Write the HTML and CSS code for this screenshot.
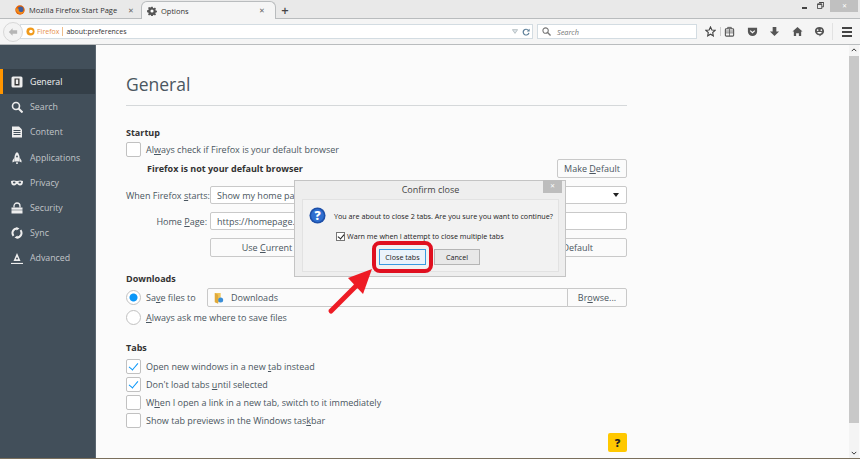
FILE: index.html
```html
<!DOCTYPE html>
<html lang="en">
<head>
    <meta charset="UTF-8">
    <title>Options</title>
    <link rel="stylesheet" href="styles.css">
</head>
<body>
    <div class="window">
        <div class="tabbar">
            <div class="tab">
                <svg class="tab-icon" viewBox="0 0 16 16"><circle cx="8" cy="8" r="7.5" fill="#e66000"/><circle cx="9" cy="7" r="4.5" fill="#3f5f9e"/><path d="M1 5c0 6 5 10 10 9 2-1 4-3 4-6-1 3-4 4-6 3-2 0-4-2-3-5z" fill="#f08a1d"/></svg>
                <span class="tab-title">Mozilla Firefox Start Page</span>
                <span class="tab-close">&#x2715;</span>
            </div>
            <div class="tab tab-active">
                <svg class="tab-icon" viewBox="0 0 16 16"><path d="M6.8 1h2.4l.4 2 1.4.6 1.7-1.1 1.7 1.7-1.1 1.7.6 1.4 2 .4v2.4l-2 .4-.6 1.4 1.1 1.7-1.7 1.7-1.7-1.1-1.4.6-.4 2H6.8l-.4-2-1.4-.6-1.7 1.1-1.7-1.7 1.1-1.7-.6-1.4-2-.4V6.700l2-.4.6-1.4-1.1-1.7 1.7-1.7 1.7 1.1 1.4-.6z" fill="#555"/><circle cx="8" cy="8" r="2.5" fill="#fff"/></svg>
                <span class="tab-title">Options</span>
                <span class="tab-close">&#x2715;</span>
            </div>
            <span class="newtab">+</span>
            <div class="winbtns">
                <span class="win-min"></span>
                <svg class="win-restore" viewBox="0 0 8 8"><path d="M2.5.5h5v5h-2M.5 2.5h5v5h-5z" fill="none" stroke="#444"/><path d="M.5 2.5h5M2.5.5h5" stroke="#444" stroke-width="1.5"/></svg>
                <span class="win-close">&#x2715;</span>
            </div>
        </div>

        <div class="toolbar">
            <span class="back">
                <svg viewBox="0 0 12 12"><path d="M1 6l4.5-4.5V4H11v4H5.5v2.500z" fill="#b5b5b5"/></svg>
            </span>
            <div class="urlbar">
                <svg class="fx-icon" viewBox="0 0 10 10"><circle cx="5" cy="5" r="4.5" fill="#f09a1a"/><circle cx="5.5" cy="5" r="2" fill="#fff"/></svg>
                <span class="fx-label">Firefox</span>
                <span class="url">about:preferences</span>
                <svg class="url-drop" viewBox="0 0 8 6"><path d="M.5.5h7L4 5.5z" fill="#dfe6ea" stroke="#aab4ba"/></svg>
                <svg class="url-reload" viewBox="0 0 10 10"><path d="M8 3a3.6 3.6 0 1 0 .6 3" fill="none" stroke="#5d7f99" stroke-width="1.5"/><path d="M9.5.8v3.500H6z" fill="#5d7f99"/></svg>
            </div>
            <div class="searchbar">
                <svg class="search-icon" viewBox="0 0 10 10"><circle cx="4" cy="4" r="3" fill="none" stroke="#777" stroke-width="1.2"/><path d="M6.2 6.2L9.5 9.5" stroke="#777" stroke-width="1.5"/></svg>
                <span class="search-text">Search</span>
            </div>
            <div class="tools">
                <svg class="tool tool-star" viewBox="0 0 12 12"><path d="M6 1l1.5 3.3 3.500.4-2.600 2.400.7 3.600L6 8.900l-3.100 1.800.7-3.600L1 4.700l3.500-.4z" fill="none" stroke="#444" stroke-width="1.2"/></svg>
                <span class="tool-sep"></span>
                <svg class="tool tool-clip" viewBox="0 0 12 12"><path d="M4 3V1.5h4V3" fill="none" stroke="#555"/><rect x="1.5" y="3" width="9" height="8" rx="1" fill="none" stroke="#555" stroke-width="1.2"/><path d="M2 5.5h8M2 7.5h8M6 3v8" stroke="#555" stroke-width=".8"/></svg>
                <svg class="tool" viewBox="0 0 12 12"><path d="M1 2h10v4a5 5 0 0 1-10 0z" fill="#555"/><path d="M3.5 5L6 7.2 8.5 5" fill="none" stroke="#fff" stroke-width="1.3"/></svg>
                <svg class="tool" viewBox="0 0 12 12"><path d="M4 1h4v5h3l-5 5-5-5h3z" fill="#555"/></svg>
                <svg class="tool" viewBox="0 0 12 12"><path d="M6 1l5.5 5H10v5H7.5V8h-3v3H2V6H.5z" fill="#555"/></svg>
                <svg class="tool" viewBox="0 0 12 12"><path d="M6 1a5 4.600 0 0 1 2 8.800L6 11.500V10A5 4.500 0 0 1 6 1z" fill="#555"/><circle cx="4" cy="4.5" r=".9" fill="#fff"/><circle cx="8" cy="4.5" r=".9" fill="#fff"/><path d="M3.5 6.5h5a2.500 2 0 0 1-5 0z" fill="#fff"/></svg>
                <span class="menu-sep"></span>
                <span class="menu-btn"><i></i><i></i><i></i></span>
            </div>
        </div>

        <div class="content">
            <nav class="sidebar">
                <a class="cat cat-active">
                    <svg viewBox="0 0 12 12"><rect x=".5" y=".5" width="11" height="11" rx="1.5" fill="#eee"/><rect x="3.5" y="2.5" width="5" height="7" fill="#333"/><rect x="4.8" y="3.5" width="2.4" height="4.5" fill="#eee"/></svg>
                    General
                </a>
                <a class="cat">
                    <svg viewBox="0 0 12 12"><circle cx="5" cy="5" r="3.500" fill="none" stroke="#eee" stroke-width="1.6"/><path d="M7.5 7.5l4 4" stroke="#eee" stroke-width="2"/></svg>
                    Search
                </a>
                <a class="cat">
                    <svg viewBox="0 0 12 12"><path d="M1 .5h7l3 3v8H1z" fill="#eee"/><path d="M2.5 4.5h7M2.5 6.500h7M2.5 8.500h7" stroke="#424f5a"/></svg>
                    Content
                </a>
                <a class="cat">
                    <svg viewBox="0 0 12 12"><path d="M6 0c1.800 1.600 2.600 3.600 2.600 6v3.500H3.400V6C3.400 3.600 4.200 1.600 6 0z" fill="#eee"/><path d="M3.400 5.500L1.500 8.500v2l1.900-1zM8.600 5.500l1.900 3v2l-1.900-1z" fill="#eee"/><circle cx="6" cy="4.500" r=".9" fill="#424f5a"/><path d="M5.200 10.300h1.600V12H5.200z" fill="#eee"/></svg>
                    Applications
                </a>
                <a class="cat">
                    <svg viewBox="0 0 12 12"><path d="M0 4c2-1 4-.5 6 0 2-.5 4-1 6 0 0 3-1 4.500-3 4.500S7 7 6 7 5 8.500 3 8.500 0 7 0 4z" fill="#eee"/><ellipse cx="3.2" cy="5.5" rx="1.3" ry=".9" fill="#424f5a"/><ellipse cx="8.8" cy="5.5" rx="1.3" ry=".9" fill="#424f5a"/></svg>
                    Privacy
                </a>
                <a class="cat">
                    <svg viewBox="0 0 12 12"><path d="M3 5.5V4a3 3 0 0 1 6 0v1.500" fill="none" stroke="#eee" stroke-width="1.3"/><rect x=".5" y="5.5" width="11" height="6" fill="#eee"/><path d="M.5 8h11" stroke="#424f5a" stroke-dasharray="1 1"/></svg>
                    Security
                </a>
                <a class="cat">
                    <svg viewBox="0 0 12 12"><path d="M6 1.5a4.500 4.500 0 0 0-3.500 7.300" fill="none" stroke="#eee" stroke-width="2"/><path d="M6 10.500a4.500 4.500 0 0 0 3.500-7.300" fill="none" stroke="#eee" stroke-width="2"/><path d="M5.500 0l3 1.500-3 2zM6.500 12l-3-1.500 3-2z" fill="#eee"/></svg>
                    Sync
                </a>
                <a class="cat">
                    <svg viewBox="0 0 12 12"><path d="M6 1l3.500 8H2.500z" fill="#eee"/><path d="M0 11.500h12" stroke="#eee" stroke-width="1.2"/><circle cx="6" cy="6.500" r="1" fill="#424f5a"/></svg>
                    Advanced
                </a>
            </nav>

            <main class="prefs">
                <h1>General</h1>

                <h2 class="h-startup">Startup</h2>
                <label class="check-row"><span class="box"></span><span>Al<u>w</u>ays check if Firefox is your default browser</span></label>
                <div class="default-row">
                    <strong>Firefox is not your default browser</strong>
                    <span class="btn btn-make"><span>Make <u>D</u>efault</span></span>
                </div>
                <div class="form-row">
                    <span class="form-label">When Firefox <u>s</u>tarts:</span>
                    <div class="field"><span>Show my home page</span><span class="caret"></span></div>
                </div>
                <div class="form-row">
                    <span class="form-label">Home <u>P</u>age:</span>
                    <div class="field"><span>https://homepage.</span></div>
                </div>
                <div class="home-btns">
                    <span class="btn"><span>Use <u>C</u>urrent Pages</span></span>
                    <span class="btn"></span>
                    <span class="btn"><span>Restore to Default</span></span>
                </div>

                <h2 class="h-downloads">Downloads</h2>
                <div class="save-row">
                    <span class="radio radio-on"></span>
                    <span class="save-label">Sa<u>v</u>e files to</span>
                    <div class="folder-field">
                        <svg class="folder-icon" viewBox="0 0 12 14"><path d="M1 1h7v11H1z" fill="#f0c55a"/><path d="M1 1l4 2v11l-4-2z" fill="#e0a93a"/><circle cx="8" cy="9.5" r="3" fill="#3a8ed8"/></svg>
                        <span>Downloads</span>
                    </div>
                    <span class="btn btn-browse"><span>Br<u>o</u>wse...</span></span>
                </div>
                <label class="radio-row"><span class="radio"></span><span><u>A</u>lways ask me where to save files</span></label>

                <h2 class="h-tabs">Tabs</h2>
                <ul class="tab-opts">
                    <li><span class="box box-on"></span><span>Open new windows in a new <u>t</u>ab instead</span></li>
                    <li><span class="box box-on"></span><span>Don't load tabs <u>u</u>ntil selected</span></li>
                    <li><span class="box"></span><span>W<u>h</u>en I open a link in a new tab, switch to it immediately</span></li>
                    <li><span class="box"></span><span>Show tab previews in the Windows tas<u>k</u>bar</span></li>
                </ul>
                <span class="help-btn">?</span>
            </main>

            <div class="scrollbar">
                <svg class="scroll-up" viewBox="0 0 8 5"><path d="M1 4l3-3 3 3" fill="none" stroke="#333" stroke-width="1.3"/></svg>
                <div class="scroll-thumb"></div>
                <svg class="scroll-down" viewBox="0 0 8 5"><path d="M1 1l3 3 3-3" fill="none" stroke="#333" stroke-width="1.3"/></svg>
            </div>
        </div>
        <div class="desktop-edge"></div>

        <div class="dialog">
            <div class="dialog-title">Confirm close<span class="dialog-x">&#x2715;</span></div>
            <div class="dialog-body">
                <div class="dialog-msg">
                    <svg class="q-icon" viewBox="0 0 18 18"><circle cx="9" cy="9" r="8.500" fill="#1d4fa8"/><circle cx="9" cy="9" r="6.800" fill="#2f6fd0"/><text x="9" y="13.5" class="q-mark">?</text></svg>
                    <span>You are about to close 2 tabs. Are you sure you want to continue?</span>
                </div>
                <label class="dialog-check"><span class="mini-box"></span><span>Warn me when I attempt to close multiple tabs</span></label>
                <div class="dialog-btns">
                    <span class="dbtn dbtn-primary">Close tabs</span>
                    <span class="dbtn">Cancel</span>
                </div>
            </div>
        </div>

        <div class="callout"></div>
        <svg class="arrow" viewBox="0 0 50 50"><path d="M5 45L30 20" stroke="#ee1c25" stroke-width="5" stroke-linecap="round"/><path d="M46 3L22 12l15 16z" fill="#ee1c25"/></svg>
    </div>
</body>
</html>
```

FILE: styles.css
```css
* {
    margin: 0;
    padding: 0;
    box-sizing: border-box;
}

html, body {
    height: 100%;
    overflow: hidden;
}

body {
    font-family: "Open Sans", sans-serif;
    font-size: 9px;
    color: #4a5660;
}

svg {
    display: block;
}

.window {
    position: relative;
    display: flex;
    flex-direction: column;
    width: 860px;
    height: 459px;
    background-color: #fbfbfb;
}

/* tab strip */
.tabbar {
    display: flex;
    align-items: flex-end;
    height: 19px;
    padding: 0 2px 0 8px;
    background-color: #e9e9e9;
    border-bottom: 1px solid #b9bcbe;
    color: #333;
}

.tab {
    display: flex;
    align-items: center;
    width: 133px;
    height: 18px;
    padding: 2px 7px 0 7px;
}

.tab-active {
    width: 135px;
    margin-bottom: -1px;
    padding: 0 10px 0 5px;
    background-color: #f5f5f5;
    border: 1px solid #b9bcbe;
    border-bottom: none;
    border-radius: 6px 6px 0 0;
}

.tab-icon {
    flex: none;
    width: 10px;
    height: 10px;
    margin-right: 4px;
}

.tab-title {
    flex: 1;
    font-size: 7.5px;
    white-space: nowrap;
}

.tab-close {
    font-size: 7px;
    color: #666;
}

.newtab {
    width: 18px;
    height: 18px;
    font-size: 13px;
    font-weight: 600;
    line-height: 20px;
    text-align: center;
    color: #444;
}

.winbtns {
    display: flex;
    align-self: flex-start;
    margin-left: auto;
}

.win-min {
    width: 5px;
    height: 2px;
    margin: 7px 10px 0 0;
    background-color: #444;
}

.win-restore {
    width: 7px;
    height: 7px;
    margin: 2px 6px 0 0;
}

.win-close {
    width: 28px;
    height: 12px;
    font-size: 6px;
    line-height: 12px;
    text-align: center;
    color: #fff;
    background-color: #c0c0c0;
}

/* nav toolbar */
.toolbar {
    display: flex;
    align-items: center;
    height: 26px;
    padding-left: 3px;
    background-color: #f5f5f5;
    border-bottom: 1px solid #b9bcbe;
}

.back {
    position: relative;
    z-index: 1;
    display: flex;
    align-items: center;
    justify-content: center;
    width: 20px;
    height: 20px;
    background-color: #f3f3f3;
    border: 1px solid #d8d8d8;
    border-radius: 50%;
}

.back svg {
    width: 10px;
    height: 10px;
}

.urlbar {
    display: flex;
    align-items: center;
    width: 513px;
    height: 15px;
    margin-left: -3px;
    padding: 0 2px 0 5px;
    background-color: #fff;
    border: 1px solid #d3dce2;
}

.fx-icon {
    width: 9px;
    height: 9px;
    margin-right: 2px;
}

.fx-label {
    padding-right: 3px;
    border-right: 1px solid #eebd8b;
    font-size: 7px;
    color: #e8914a;
}

.url {
    flex: 1;
    padding-left: 3px;
    font-size: 7px;
    color: #333;
}

.url-drop {
    width: 6px;
    height: 5px;
    margin-right: 4px;
}

.url-reload {
    width: 8px;
    height: 8px;
}

.searchbar {
    display: flex;
    align-items: center;
    width: 160px;
    height: 15px;
    margin-left: 4px;
    padding-left: 4px;
    background-color: #fff;
    border: 1px solid #d3dce2;
}

.search-icon {
    width: 9px;
    height: 9px;
    margin-right: 6px;
}

.search-text {
    font-size: 7.3px;
    font-style: italic;
    color: #777;
}

.tools {
    display: flex;
    align-items: center;
    margin-left: 7.5px;
}

.tool {
    width: 11px;
    height: 11px;
    margin-left: 11.5px;
}

.tool-star {
    margin-left: 0;
}

.tool-sep {
    width: 1px;
    height: 9px;
    margin-left: 4px;
    background-color: #ccc;
}

.tool-clip {
    margin-left: 3.5px;
}

.menu-sep {
    width: 1px;
    height: 17px;
    margin-left: 7px;
    background-color: #e2e2e2;
}

.menu-btn {
    display: flex;
    flex-direction: column;
    gap: 2px;
    width: 10px;
    margin-left: 9px;
}

.menu-btn i {
    height: 2px;
    background-color: #444;
}

/* page body */
.content {
    flex: 1;
    display: flex;
    min-height: 0;
}

.sidebar {
    flex: none;
    width: 96px;
    padding-top: 24px;
    background-color: #424f5a;
    border-right: 1px solid #5a6670;
}

.cat {
    display: flex;
    align-items: center;
    height: 25.2px;
    padding: 1px 0 0 8px;
    border-left: 3px solid transparent;
    font-size: 8.8px;
    color: #c1c5c9;
}

.cat svg {
    width: 12px;
    height: 12px;
    margin-right: 7px;
}

.cat-active {
    background-color: #343f48;
    border-left-color: #ff9500;
    color: #f2f2f2;
}

.prefs {
    position: relative;
    flex: 1;
    padding: 25px 222px 0 30px;
}

h1 {
    height: 36px;
    font-size: 17.5px;
    font-weight: 400;
    line-height: 28px;
    border-bottom: 1px solid #d5d8da;
}

h2 {
    font-size: 9px;
    font-weight: 700;
    line-height: 15px;
    color: #333;
}

.h-startup {
    margin-top: 19px;
}

.check-row, .radio-row, .tab-opts li {
    display: flex;
    align-items: center;
    gap: 5px;
}

.check-row {
    height: 15px;
    margin-top: 2px;
}

.box {
    flex: none;
    width: 15px;
    height: 15px;
    background-color: #fff;
    border: 1px solid #c1c1c1;
    border-radius: 2px;
}

.box-on {
    position: relative;
}

.box-on::after {
    content: "";
    position: absolute;
    left: 4px;
    top: 1px;
    width: 4px;
    height: 8px;
    border: solid #0996f8;
    border-width: 0 1.5px 1.5px 0;
    transform: rotate(40deg);
}

.default-row {
    display: flex;
    align-items: center;
    justify-content: space-between;
    height: 19px;
    margin-top: 2px;
    padding-left: 21px;
}

.default-row strong {
    color: #333;
}

.btn {
    display: flex;
    align-items: center;
    justify-content: center;
    height: 19px;
    background-color: #fbfbfb;
    border: 1px solid #c9c9c9;
    border-radius: 2px;
    white-space: nowrap;
}

.btn-make {
    width: 70px;
}

.form-row {
    display: flex;
    align-items: center;
    height: 18px;
    margin-top: 8px;
}

.form-label {
    width: 84px;
    padding-right: 3px;
    text-align: right;
    white-space: nowrap;
}

.field {
    display: flex;
    align-items: center;
    justify-content: space-between;
    flex: 1;
    height: 18px;
    padding: 0 7px 0 6px;
    background-color: #fff;
    border: 1px solid #c9c9c9;
    border-radius: 2px;
}

.caret {
    width: 0;
    height: 0;
    border: 3px solid transparent;
    border-top: 4px solid #222;
    border-bottom: none;
}

.home-btns {
    display: grid;
    grid-template-columns: 141px 1fr 144px;
    gap: 6px;
    margin: 8px 0 0 84px;
}

.h-downloads {
    margin-top: 14px;
}

.save-row {
    display: flex;
    align-items: center;
    height: 19px;
    margin-top: 2px;
}

.radio {
    flex: none;
    width: 15px;
    height: 15px;
    background-color: #fff;
    border: 1px solid #c1c1c1;
    border-radius: 50%;
}

.radio-on {
    background: radial-gradient(circle, #0996f8 0 3.5px, #fff 4.5px);
}

.save-label {
    width: 66px;
    padding-left: 5px;
}

.folder-field {
    flex: 1;
    display: flex;
    align-items: center;
    gap: 7px;
    height: 19px;
    padding-left: 6px;
    background-color: #fbfbfb;
    border: 1px solid #c9c9c9;
    border-radius: 2px 0 0 2px;
}

.folder-icon {
    width: 10px;
    height: 12px;
}

.btn-browse {
    width: 60px;
    margin-left: -1px;
    border-radius: 0 2px 2px 0;
}

.radio-row {
    height: 15px;
    margin-top: 3px;
}

.h-tabs {
    margin-top: 15px;
}

.tab-opts {
    list-style: none;
    margin-top: 2px;
}

.tab-opts li {
    height: 18.2px;
}

.help-btn {
    position: absolute;
    left: 512px;
    top: 388px;
    width: 19px;
    height: 19px;
    font-size: 11px;
    font-weight: 800;
    line-height: 19px;
    text-align: center;
    color: #222;
    background-color: #ffc800;
    border-radius: 2px;
}

.scrollbar {
    flex: none;
    width: 10px;
    margin-right: 1px;
    background-color: #f4f4f4;
}

.scroll-up, .scroll-down {
    width: 6px;
    height: 4px;
    margin: 3px auto 4px;
}

.scroll-down {
    margin: 28px auto 0;
}

.scroll-thumb {
    height: 367px;
    background-color: #c8c8c8;
}

.desktop-edge {
    height: 1px;
    background-color: #7a6f5c;
}

/* dialog floats over the page */
.dialog {
    position: absolute;
    left: 294px;
    top: 180px;
    width: 272px;
    height: 97px;
    padding: 0 6px 0 7px;
    background-color: #eeeeee;
    border: 1px solid #c4c4c4;
    color: #222;
}

.dialog-title {
    position: relative;
    height: 18px;
    font-size: 9px;
    line-height: 17px;
    text-align: center;
    color: #444;
}

.dialog-x {
    position: absolute;
    right: -3px;
    top: -1px;
    width: 19px;
    height: 13px;
    font-size: 6px;
    line-height: 13px;
    color: #fff;
    background-color: #bdbdbd;
}

.dialog-body {
    height: 73px;
    padding: 7px 6px 0;
    background-color: #f2f2f2;
    border: 1px solid #e2e2e2;
}

.dialog-msg {
    display: flex;
    align-items: center;
    gap: 8px;
    height: 17px;
    font-size: 7.2px;
    white-space: nowrap;
}

.q-icon {
    flex: none;
    width: 17px;
    height: 17px;
}

.q-mark {
    font-family: "Open Sans", sans-serif;
    font-size: 13px;
    font-weight: 800;
    text-anchor: middle;
    fill: #fff;
}

.dialog-check {
    display: flex;
    align-items: center;
    gap: 2px;
    height: 12px;
    margin: 6px 0 0 27px;
    font-size: 7.2px;
}

.mini-box {
    position: relative;
    width: 9px;
    height: 9px;
    background-color: #fff;
    border: 1px solid #777;
}

.mini-box::after {
    content: "";
    position: absolute;
    left: 2px;
    top: 0;
    width: 3px;
    height: 5px;
    border: solid #222;
    border-width: 0 1.5px 1.5px 0;
    transform: rotate(40deg);
}

.dialog-btns {
    display: flex;
    gap: 8px;
    margin: 7px 0 0 70px;
}

.dbtn {
    display: flex;
    align-items: center;
    justify-content: center;
    width: 46px;
    height: 16px;
    font-size: 7.2px;
    background-color: #e8e8e8;
    border: 1px solid #b5b5b5;
}

.dbtn-primary {
    width: 47px;
    border: 1px solid #3a9ae0;
    background-color: #eaf3fb;
}

.callout {
    position: absolute;
    left: 372px;
    top: 241px;
    width: 61px;
    height: 32px;
    border: 4px solid #e01020;
    border-radius: 8px;
}

.arrow {
    position: absolute;
    left: 326px;
    top: 266px;
    width: 50px;
    height: 50px;
}
```
